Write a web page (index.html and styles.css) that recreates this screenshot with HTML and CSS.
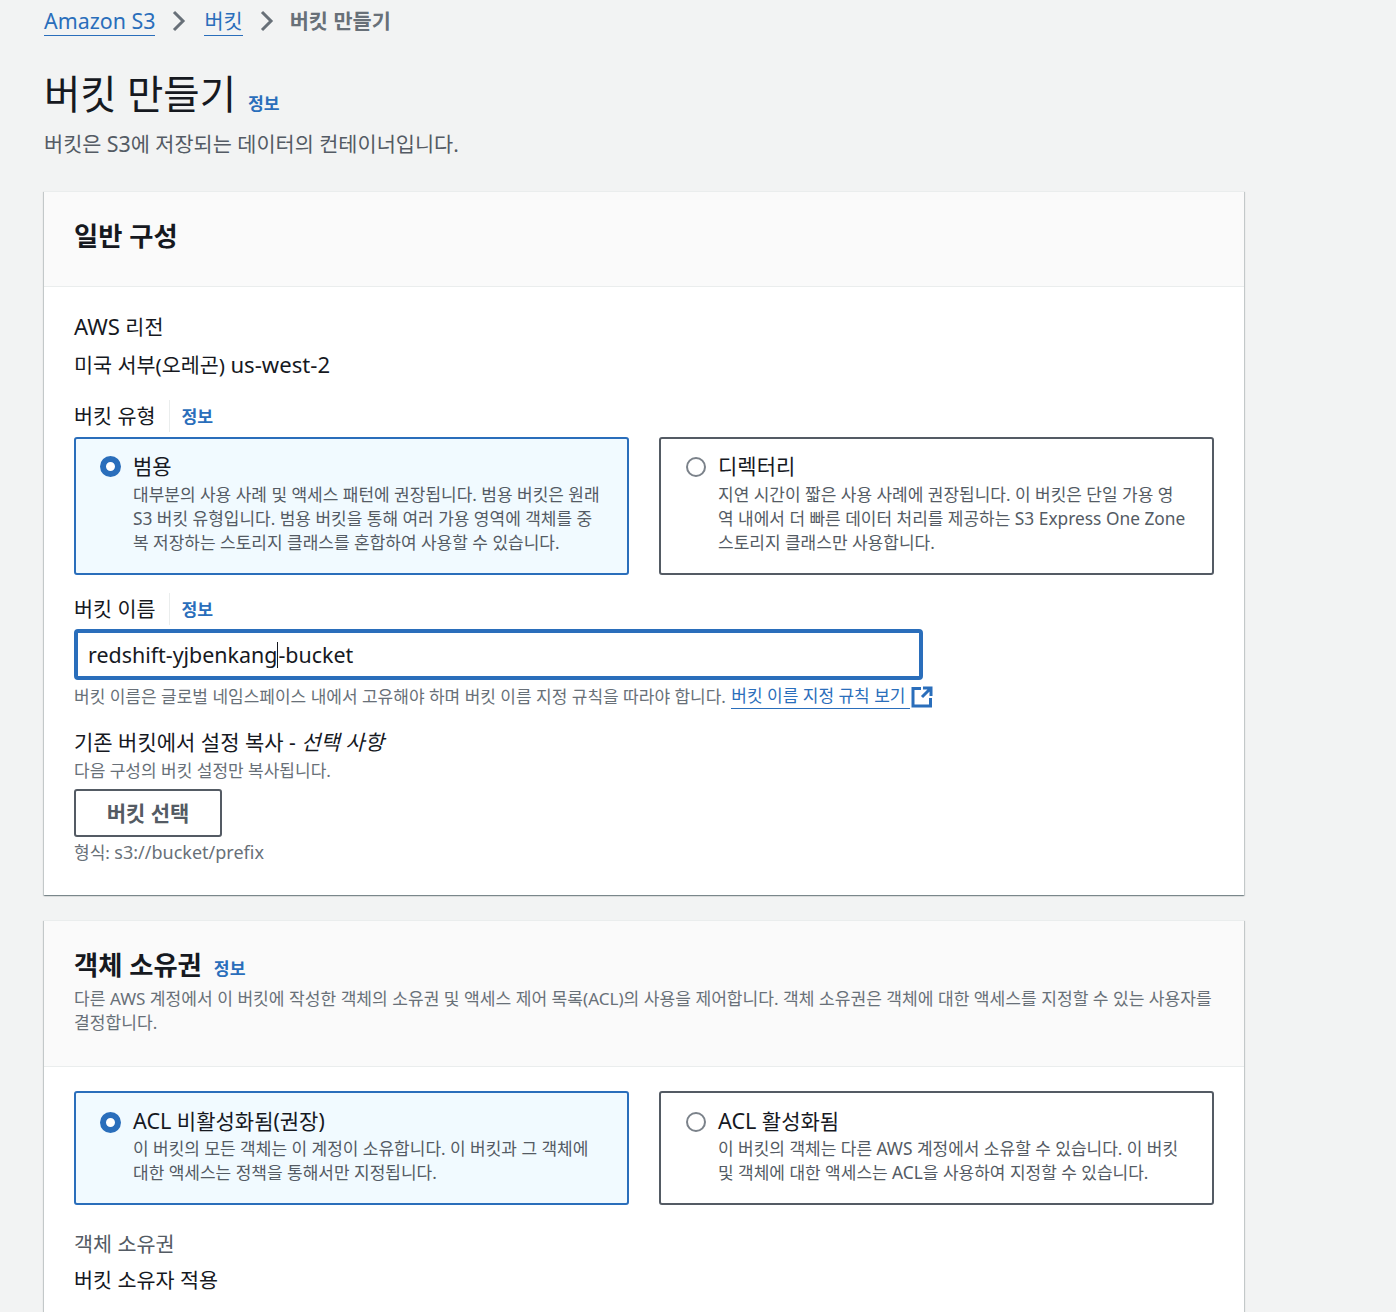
FILE: index.html
```html
<!DOCTYPE html>
<html lang="ko">
<head>
  <meta charset="UTF-8" />
  <title>버킷 만들기</title>
  <link rel="stylesheet" href="styles.css">
</head>
<body>
  <div class="page">

    <!-- 경로 -->
    <nav class="crumbs">
      <a class="link" href="#"><span class="lat">Amazon S3</span></a>
      <svg class="crumb-sep" viewBox="0 0 14 22"><path d="M2 2l9 9-9 9" /></svg>
      <a class="link" href="#">버킷</a>
      <svg class="crumb-sep" viewBox="0 0 14 22"><path d="M2 2l9 9-9 9" /></svg>
      <span class="crumb-now">버킷 만들기</span>
    </nav>

    <div class="page-head">
      <h1>버킷 만들기</h1>
      <a class="info" href="#">정보</a>
    </div>
    <p class="page-desc">버킷은 <span class="lat">S3</span>에 저장되는 데이터의 컨테이너입니다.</p>

    <!-- 일반 구성 -->
    <section class="card">
      <div class="card-head card-head-plain">
        <h2>일반 구성</h2>
      </div>
      <div class="card-body">
        <div class="label"><span class="lat">AWS</span> 리전</div>
        <div class="value">미국 서부(오레곤) <span class="lat">us-west-2</span></div>

        <div class="label-row">
          <span class="label">버킷 유형</span>
          <a class="info info-split" href="#">정보</a>
        </div>
        <div class="tiles tiles-type">
          <div class="tile tile-on">
            <span class="radio radio-on"></span>
            <div>
              <div class="tile-title">범용</div>
              <p class="tile-desc">대부분의 사용 사례 및 액세스 패턴에 권장됩니다. 범용 버킷은 원래<br><span class="lat">S3</span> 버킷 유형입니다. 범용 버킷을 통해 여러 가용 영역에 객체를 중<br>복 저장하는 스토리지 클래스를 혼합하여 사용할 수 있습니다.</p>
            </div>
          </div>
          <div class="tile">
            <span class="radio radio-off"></span>
            <div>
              <div class="tile-title">디렉터리</div>
              <p class="tile-desc">지연 시간이 짧은 사용 사례에 권장됩니다. 이 버킷은 단일 가용 영<br>역 내에서 더 빠른 데이터 처리를 제공하는 <span class="lat">S3 Express One Zone</span><br>스토리지 클래스만 사용합니다.</p>
            </div>
          </div>
        </div>

        <div class="label-row label-row-name">
          <span class="label">버킷 이름</span>
          <a class="info info-split" href="#">정보</a>
        </div>
        <div class="name-input"><span class="lat">redshift-yjbenkang</span><i class="caret"></i><span class="lat">-bucket</span></div>
        <p class="hint hint-name">버킷 이름은 글로벌 네임스페이스 내에서 고유해야 하며 버킷 이름 지정 규칙을 따라야 합니다. <a class="link" href="#">버킷 이름 지정 규칙 보기 </a><svg class="ext" viewBox="0 0 22 22"><path d="M10 2.5H2v17.5h17.5V12M12 2h8v8M20 2l-9 9" /></svg></p>

        <div class="label copy-label">기존 버킷에서 설정 복사 - <em>선택 사항</em></div>
        <p class="hint copy-hint">다음 구성의 버킷 설정만 복사됩니다.</p>
        <button class="btn">버킷 선택</button>
        <p class="hint">형식: <span class="lat">s3://bucket/prefix</span></p>
      </div>
    </section>

    <!-- 객체 소유권 -->
    <section class="card">
      <div class="card-head card-head-own">
        <div class="page-head">
          <h2>객체 소유권</h2>
          <a class="info" href="#">정보</a>
        </div>
        <p class="hint card-desc">다른 AWS 계정에서 이 버킷에 작성한 객체의 소유권 및 액세스 제어 목록(ACL)의 사용을 제어합니다. 객체 소유권은 객체에 대한 액세스를 지정할 수 있는 사용자를 결정합니다.</p>
      </div>
      <div class="card-body card-body-own">
        <div class="tiles tiles-own">
          <div class="tile tile-on">
            <span class="radio radio-on"></span>
            <div>
              <div class="tile-title"><span class="lat">ACL</span> 비활성화됨(권장)</div>
              <p class="tile-desc">이 버킷의 모든 객체는 이 계정이 소유합니다. 이 버킷과 그 객체에<br>대한 액세스는 정책을 통해서만 지정됩니다.</p>
            </div>
          </div>
          <div class="tile">
            <span class="radio radio-off"></span>
            <div>
              <div class="tile-title"><span class="lat">ACL</span> 활성화됨</div>
              <p class="tile-desc">이 버킷의 객체는 다른 <span class="lat">AWS</span> 계정에서 소유할 수 있습니다. 이 버킷<br>및 객체에 대한 액세스는 <span class="lat">ACL</span>을 사용하여 지정할 수 있습니다.</p>
            </div>
          </div>
        </div>
        <div class="label label-muted">객체 소유권</div>
        <div class="value value-own">버킷 소유자 적용</div>
      </div>
    </section>

  </div>
</body>
</html>
```

FILE: styles.css
```css
* { margin: 0; padding: 0; box-sizing: border-box; }
html, body { width: 100%; height: 100%; overflow: hidden; }
body { background: #f2f3f3; color: #16191f; font-family: "Noto Sans", "Noto Sans CJK KR", sans-serif; font-size: 20.7px; line-height: 30px; }

.page { width: 1200px; margin-left: 44px; padding-top: 6px; }
.link { color: #2a6ebb; text-decoration: none; border-bottom: 1px solid #2a6ebb; }
.lat { font-size: 1.03em; line-height: 1; }

/* 경로 */
.crumbs { display: flex; align-items: center; height: 30px; font-size: 20.8px; }
.crumbs .link { line-height: 28px; }
.crumbs .lat { font-size: 21.4px; }
.crumb-sep { width: 14px; height: 22px; margin: 0 18px 0 17px; fill: none; stroke: #687078; stroke-width: 3; }
.crumb-now { color: #687078; font-weight: 700; margin-left: -2px; }

/* 제목 */
.page-head { display: flex; align-items: baseline; }
.page > .page-head { margin-top: 28px; }
.page > .page-head .info { transform: translateY(1px); }
h1 { font-size: 39.5px; line-height: 60px; font-weight: 400; }
h2 { font-size: 26.3px; line-height: 36px; font-weight: 700; }
.info { color: #2a6ebb; font-size: 17.2px; font-weight: 700; text-decoration: none; margin-left: 12px; }
.page-desc { color: #545b64; line-height: 30px; margin-top: 5px; font-size: 20.8px; }

/* 카드 */
.card { background: #fff; margin-top: 32px; box-shadow: 0 1px 1px 0 rgba(0, 28, 36, 0.3), 1px 1px 1px 0 rgba(0, 28, 36, 0.15), -1px 1px 1px 0 rgba(0, 28, 36, 0.15); border-top: 1px solid #eaeded; }
.card + .card { margin-top: 25px; }
.card-head { background: #fafafa; border-bottom: 1px solid #eaeded; padding: 26px 30px 32px; }
.card-head-own { padding-bottom: 31px; }
.card-body { padding: 25px 30px 30px; }
.card-body-own { padding-top: 24px; }

.label { line-height: 30px; }
.label .lat, .value .lat { font-size: 1.07em; }
.label-muted { color: #545b64; margin-top: 24px; }
.value { line-height: 30px; margin-top: 8px; }
.value-own { margin-top: 6px; }
.label-row { display: flex; align-items: center; height: 30px; margin-top: 21px; }
.label-row-name { margin-top: 19px; }
.info-split { margin-left: 13px; border-left: 1px solid #eaeded; padding: 2px 0 0 12px; line-height: 30px; }

/* 선택 타일 */
.tiles { display: grid; grid-template-columns: 555px 555px; gap: 30px; }
.tiles-type { margin-top: 6px; }
.tile { display: flex; gap: 12px; background: #fff; border: 2px solid #545b64; border-radius: 3px; padding: 13px 20px 18px 24px; }
.tiles-type .tile { padding-top: 12px; padding-bottom: 18px; }
.tile-on { background: #f1faff; border-color: #2a6ebb; }
.tile-title { line-height: 30px; font-size: 21px; }
.tile-desc { color: #545b64; font-size: 17px; line-height: 24px; white-space: nowrap; margin-top: 1px; }
.tiles-type .tile-desc { margin-top: 2px; }
.tile-desc .lat { font-size: 1.02em; }
.radio { flex: none; width: 21px; height: 21px; margin-top: 5px; border-radius: 50%; background: #fff; }
.radio-on { border: 6px solid #2a6ebb; }
.radio-off { width: 20px; height: 20px; margin-top: 6px; margin-left: 1px; border: 2px solid #7b828a; }
.tiles-own .radio { margin-top: 6px; }

/* 버킷 이름 */
.name-input { display: flex; align-items: center; width: 849px; height: 51px; margin-top: 5px; padding-left: 10px; background: #fff; border: 4px solid #2a6ebb; border-radius: 4px; line-height: 30px; }
.name-input .lat { font-size: 1.035em; }
.caret { width: 1px; height: 26px; background: #16191f; }
.hint { color: #687078; font-size: 17px; line-height: 24px; }
.hint .lat { font-size: 1.06em; }
.card-desc { margin-top: 3px; font-size: 17.1px; word-break: keep-all; }
.hint-name { margin-top: 4px; display: flex; align-items: center; white-space: pre-wrap; }
.hint-name .link { margin-left: 1px; line-height: 24px; }
.ext { width: 22px; height: 22px; margin-left: 1px; fill: none; stroke: #2a6ebb; stroke-width: 3; }
.copy-label { margin-top: 18px; font-size: 21px; }
.copy-hint { margin-top: 2px; }
em { font-style: italic; }
.btn { display: block; width: 148px; height: 48px; margin: 6px 0 4px; padding-bottom: 2px; background: #fff; border: 2px solid #545b64; border-radius: 3px; color: #545b64; font-family: inherit; font-size: 21px; font-weight: 700; }
```
